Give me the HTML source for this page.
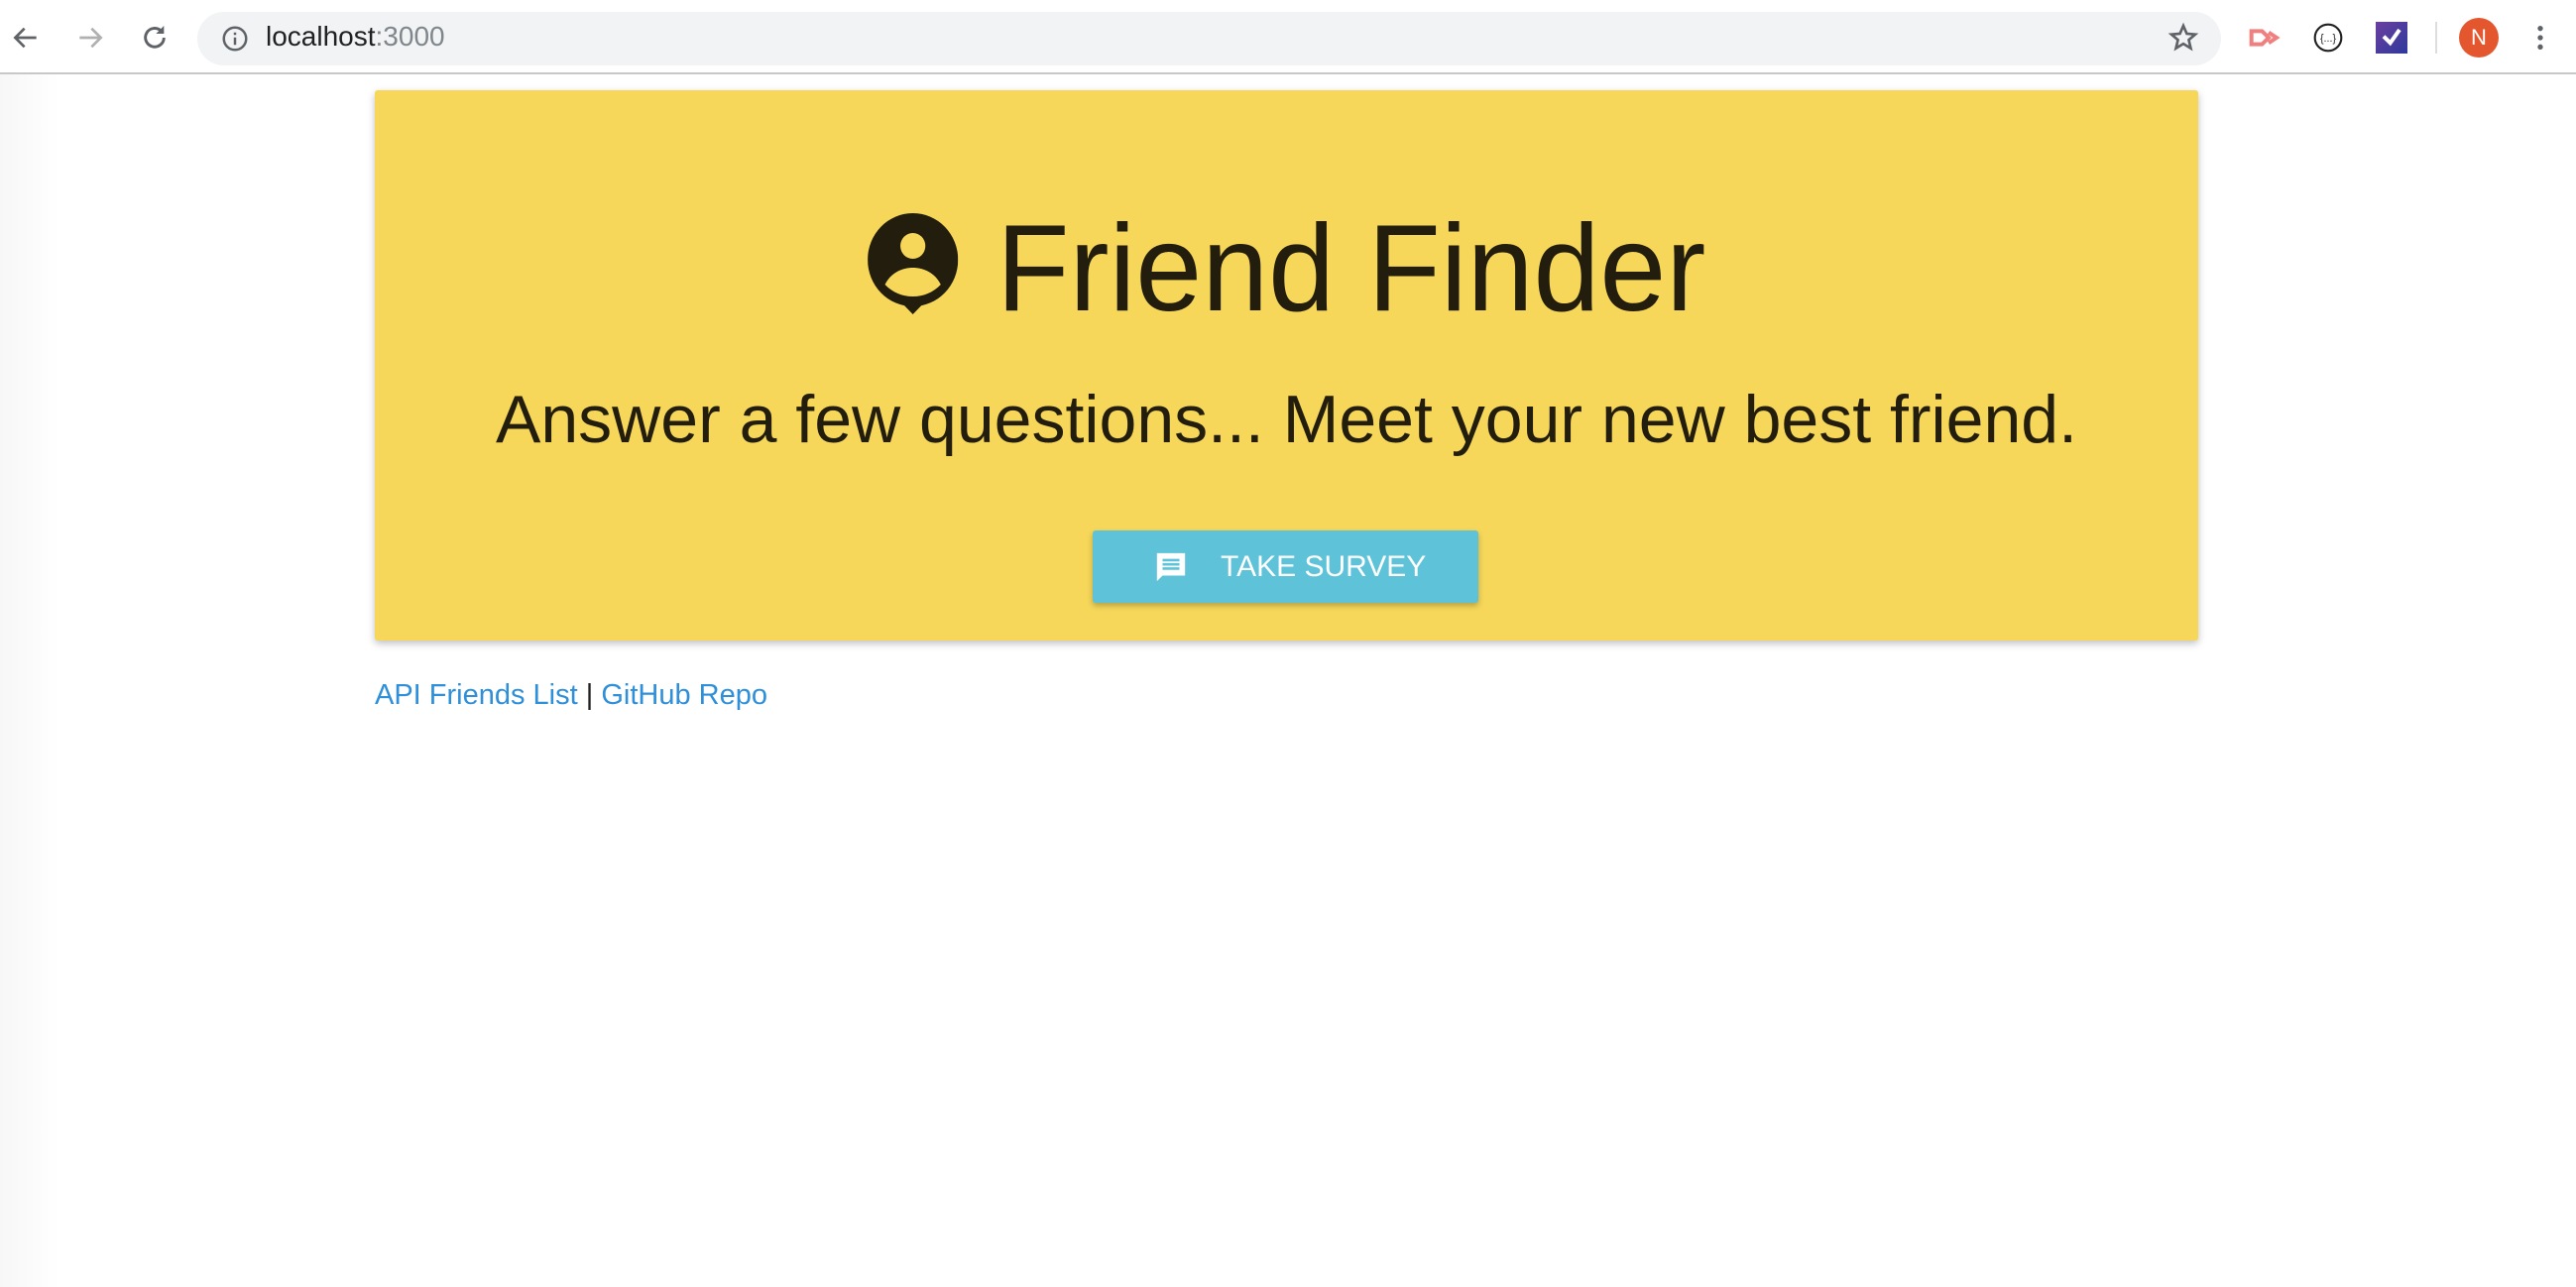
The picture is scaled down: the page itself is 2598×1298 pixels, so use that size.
<!DOCTYPE html>
<html><head><meta charset="utf-8"><style>
*{margin:0;padding:0;box-sizing:border-box}
body{width:2598px;height:1298px;background:#fff;font-family:"Liberation Sans",Arial,sans-serif;position:relative;overflow:hidden}
.bar{position:absolute;left:0;top:0;width:2598px;height:75px;background:#fff;border-bottom:2px solid #c8c8c8}
.omni{position:absolute;left:199px;top:12px;width:2041px;height:54px;background:#f1f3f4;border-radius:27px}
.url{position:absolute;left:268px;top:21px;font-size:28px;color:#202124}
.url span{color:#80868b}
.card{position:absolute;left:378px;top:91px;width:1839px;height:555px;background:#f6d75a;border-radius:3px;box-shadow:0 3px 8px rgba(0,0,0,.25)}
.t{position:absolute;left:0;width:100%;text-align:center;color:#221d0c;white-space:nowrap}
.t1{top:100px;font-size:124px;line-height:160px}
.t2{top:282px;font-size:68px;line-height:100px}
.btn{position:absolute;left:724px;top:444px;width:389px;height:73px;background:#5ec3d8;border-radius:3px;box-shadow:0 3px 6px rgba(0,0,0,.25);color:#fff;font-size:30px;line-height:73px}
.links{position:absolute;left:378px;top:685px;font-size:29px;color:#222}
.links a{color:#2f8fd8;text-decoration:none}
</style></head><body>
<div style="position:absolute;left:0;top:75px;width:60px;height:1223px;background:linear-gradient(90deg,#f7f7f7,#fff)"></div>
<div class="bar">
<svg style="position:absolute;left:10px;top:22px" width="32" height="32" viewBox="0 0 24 24"><path d="M20 12H5M11 5l-7 7 7 7" stroke="#5f6368" stroke-width="2" fill="none"/></svg>
<svg style="position:absolute;left:75px;top:22px" width="32" height="32" viewBox="0 0 24 24"><path d="M4 12h15M13 5l7 7-7 7" stroke="#b0b0b0" stroke-width="2" fill="none"/></svg>
<svg style="position:absolute;left:140px;top:22px" width="32" height="32" viewBox="0 0 24 24"><path d="M19 12a7 7 0 1 1-2-5" stroke="#5f6368" stroke-width="2.2" fill="none"/><path d="M19 3v6h-6z" fill="#5f6368"/></svg>
<div class="omni"></div>
<svg style="position:absolute;left:222px;top:24px" width="30" height="30" viewBox="0 0 24 24"><circle cx="12" cy="12" r="9" stroke="#5f6368" stroke-width="2" fill="none"/><path d="M12 11v6M12 7v2" stroke="#5f6368" stroke-width="2"/></svg>
<div class="url">localhost<span>:3000</span></div>
<svg style="position:absolute;left:2186px;top:22px" width="32" height="32" viewBox="0 0 24 24"><path d="M12 3l2.6 6 6.4.5-4.9 4.2 1.5 6.3L12 16.6 6.4 20l1.5-6.3L3 9.5 9.4 9z" stroke="#5f6368" stroke-width="2" fill="none"/></svg>
<svg style="position:absolute;left:2268px;top:24px" width="32" height="28" viewBox="0 0 24 20"><path d="M2 5h8l5 5-5 5H2z M15 6l6 4-6 4" stroke="#f08080" stroke-width="3" fill="none"/></svg>
<svg style="position:absolute;left:2332px;top:22px" width="32" height="32" viewBox="0 0 24 24"><circle cx="12" cy="12" r="10" stroke="#222" stroke-width="1.6" fill="none"/><text x="12" y="15" font-size="8" text-anchor="middle" fill="#222">{...}</text></svg>
<div style="position:absolute;left:2396px;top:22px;width:32px;height:32px;background:linear-gradient(135deg,#6b3fa0,#2d3a9c)"><svg width="32" height="32" viewBox="0 0 24 24"><path d="M6 11l5 5 7-10" stroke="#fff" stroke-width="3" fill="none"/></svg></div>
<div style="position:absolute;left:2456px;top:22px;width:2px;height:32px;background:#ddd"></div>
<div style="position:absolute;left:2480px;top:18px;width:40px;height:40px;border-radius:50%;background:#e4572e;color:#fff;font-size:22px;text-align:center;line-height:40px">N</div>
<svg style="position:absolute;left:2552px;top:22px" width="20" height="32" viewBox="0 0 10 24"><circle cx="5" cy="5" r="2" fill="#5f6368"/><circle cx="5" cy="12" r="2" fill="#5f6368"/><circle cx="5" cy="19" r="2" fill="#5f6368"/></svg>
</div>
<div class="card">
<div class="t t1"><span style="display:inline-block;transform:scaleX(0.97)"><svg style="vertical-align:-4px;margin-right:40px" width="94" height="102" viewBox="0 0 94 102"><circle cx="47" cy="47" r="47" fill="#221d0c"/><path d="M33 88h28l-14 14z" fill="#221d0c"/><circle cx="47" cy="33" r="13" fill="#f6d75a"/><path d="M18 72c6-12 18-17 29-17s23 5 29 17c-8 8-18 12-29 12s-21-4-29-12z" fill="#f6d75a"/></svg>Friend Finder</span></div>
<div class="t t2">Answer a few questions... Meet your new best friend.</div>
<div class="btn"><svg style="position:absolute;left:62px;top:20px" width="34" height="34" viewBox="0 0 24 24"><path d="M2 2h20v16H6l-4 4z" fill="#fff"/><path d="M6 7h12M6 10h12M6 13h12" stroke="#5ec3d8" stroke-width="1.8"/></svg><span style="position:absolute;left:129px">TAKE SURVEY</span></div>
</div>
<div class="links"><a>API Friends List</a> | <a>GitHub Repo</a></div>
</body></html>
